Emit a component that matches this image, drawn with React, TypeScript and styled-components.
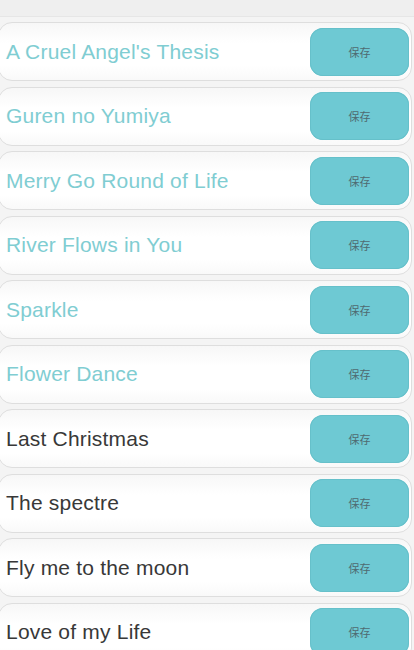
import React from "react";
import styled, { createGlobalStyle } from "styled-components";

const Global = createGlobalStyle`
  html, body { margin: 0; padding: 0; background: #f3f3f3; }
  body { font-family: "Liberation Sans", Arial, sans-serif; overflow: hidden; }
`;

const Page = styled.div`
  width: 414px;
  height: 650px;
  overflow: hidden;
  background: #f4f4f4;
  display: flex;
  flex-direction: column;
`;

const TopBar = styled.div`
  height: 16px;
  flex: none;
  background: #efefef;
  border-bottom: 1px solid #e6e6e6;
`;

const List = styled.div`
  display: flex;
  flex-direction: column;
  gap: 5.5px;
  padding: 5px 2px 0 0;
  margin-left: -2px;
`;

const Card = styled.div`
  height: 59px;
  box-sizing: border-box;
  flex: none;
  display: flex;
  align-items: center;
  justify-content: space-between;
  border: 1.5px solid #dedede;
  border-radius: 14px;
  background: linear-gradient(#f7f7f7, #ffffff 35%, #ffffff 75%, #f9f9f9);
  padding: 0 2px 0 7px;
`;

const Title = styled.span<{ $accent: boolean }>`
  font-size: 21px;
  letter-spacing: 0.2px;
  color: ${(p) => (p.$accent ? "#80cdd2" : "#383838")};
`;

const SaveButton = styled.button`
  width: 99px;
  height: 48px;
  border: none;
  border-radius: 13px;
  background: #6ec9d3;
  box-shadow: inset 0 0 0 1px #66c0ca;
  color: #4e6a70;
  font-family: "Noto Sans CJK SC", sans-serif;
  font-size: 11px;
  display: flex;
  align-items: center;
  justify-content: center;
  padding: 0;
`;

const songs: { title: string; accent: boolean }[] = [
  { title: "A Cruel Angel's Thesis", accent: true },
  { title: "Guren no Yumiya", accent: true },
  { title: "Merry Go Round of Life", accent: true },
  { title: "River Flows in You", accent: true },
  { title: "Sparkle", accent: true },
  { title: "Flower Dance", accent: true },
  { title: "Last Christmas", accent: false },
  { title: "The spectre", accent: false },
  { title: "Fly me to the moon", accent: false },
  { title: "Love of my Life", accent: false },
];

export default function App() {
  return (
    <Page>
      <Global />
      <TopBar />
      <List>
        {songs.map((s) => (
          <Card key={s.title}>
            <Title $accent={s.accent}>{s.title}</Title>
            <SaveButton>保存</SaveButton>
          </Card>
        ))}
      </List>
    </Page>
  );
}
